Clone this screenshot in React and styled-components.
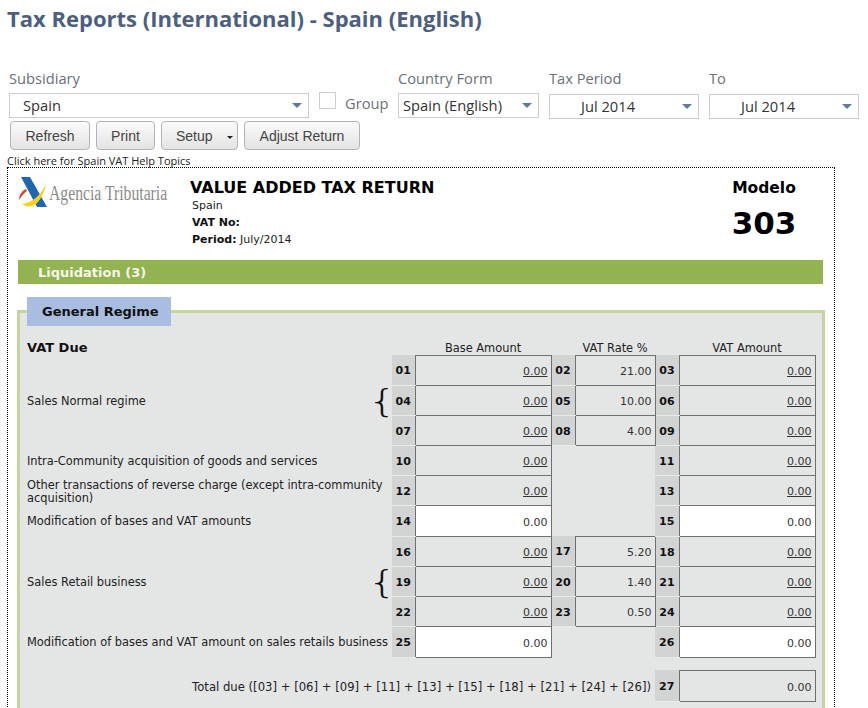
import React from 'react';
import styled, { createGlobalStyle } from 'styled-components';

const GlobalStyle = createGlobalStyle`
  html, body {
    margin: 0;
    height: 100%;
    overflow: hidden;
    background: #fff;
  }
`;

const lines = [
  { codes: ['01', '02', '03'], rate: '21.00' },
  { codes: ['04', '05', '06'], rate: '10.00', label: 'Sales Normal regime', brace: true },
  { codes: ['07', '08', '09'], rate: '4.00' },
  { codes: ['10', null, '11'], label: 'Intra-Community acquisition of goods and services' },
  { codes: ['12', null, '13'], label: 'Other transactions of reverse charge (except intra-community acquisition)', wrapped: true },
  { codes: ['14', null, '15'], label: 'Modification of bases and VAT amounts', open: true },
  { codes: ['16', '17', '18'], rate: '5.20' },
  { codes: ['19', '20', '21'], rate: '1.40', label: 'Sales Retail business', brace: true },
  { codes: ['22', '23', '24'], rate: '0.50' },
  { codes: ['25', null, '26'], label: 'Modification of bases and VAT amount on sales retails business', open: true },
];

function Select({ value, width, indent, offset }) {
  return (
    <SelectBox $width={width} $indent={indent} $offset={offset}>
      {value}
      <Caret />
    </SelectBox>
  );
}

function Amount({ open }) {
  if (open) return <ValueCell $open>0.00</ValueCell>;
  return (
    <ValueCell>
      <AmountLink>0.00</AmountLink>
    </ValueCell>
  );
}

function Logo() {
  return (
    <LogoWrap>
      <LogoMark viewBox="0 0 32 32">
        <path d="M2 0 L11 0 L28 30 L18 30 Z" fill="#1f66ae" />
        <path d="M27 6 C23 17 14 26 3 27 C8 31 15 30 19 25 C23 20 26 13 27 6 Z" fill="#f6d21c" />
        <path d="M7 12 C3 14 0 18 0 23 C2 20 4 17 8 14 Z" fill="#d8412f" />
      </LogoMark>
      <LogoText>Agencia Tributaria</LogoText>
    </LogoWrap>
  );
}

export default function App() {
  return (
    <Page>
      <GlobalStyle />
      <Title>Tax Reports (International) - Spain (English)</Title>
      <Filters>
        <Field>
          <FieldLabel>Subsidiary</FieldLabel>
          <Select value="Spain" width={300} indent={13} />
        </Field>
        <GroupField>
          <CheckBox />
          <GroupLabel>Group</GroupLabel>
        </GroupField>
        <Field>
          <FieldLabel>Country Form</FieldLabel>
          <Select value="Spain (English)" width={141} indent={4} />
        </Field>
        <Field>
          <FieldLabel>Tax Period</FieldLabel>
          <Select value="Jul 2014" width={150} indent={31} offset={1} />
        </Field>
        <Field>
          <FieldLabel>To</FieldLabel>
          <Select value="Jul 2014" width={150} indent={31} offset={1} />
        </Field>
      </Filters>
      <Buttons>
        <Button $width={80}>Refresh</Button>
        <Button $width={59}>Print</Button>
        <SetupButton $width={77}>
          Setup
          <SmallCaret />
        </SetupButton>
        <Button $width={116}>Adjust Return</Button>
      </Buttons>
      <HelpLink>Click here for Spain VAT Help Topics</HelpLink>
      <Report>
        <ReportHeader>
          <Logo />
          <Heading>
            <HeadingTitle>VALUE ADDED TAX RETURN</HeadingTitle>
            <HeadingLine>Spain</HeadingLine>
            <HeadingLine><b>VAT No:</b></HeadingLine>
            <HeadingLine><b>Period:</b> July/2014</HeadingLine>
          </Heading>
          <Modelo>
            <ModeloLabel>Modelo</ModeloLabel>
            <ModeloNumber>303</ModeloNumber>
          </Modelo>
        </ReportHeader>
        <SectionBar>Liquidation (3)</SectionBar>
        <PanelWrap>
          <Tab>General Regime</Tab>
          <Panel>
            <Grid>
              <colgroup>
                <col width="365" />
                <col width="23" />
                <col width="136" />
                <col width="24" />
                <col width="80" />
                <col width="24" />
                <col width="136" />
              </colgroup>
              <tbody>
                <tr>
                  <SubTitle>VAT Due</SubTitle>
                  <td />
                  <ColumnHead>Base Amount</ColumnHead>
                  <td />
                  <ColumnHead>VAT Rate %</ColumnHead>
                  <td />
                  <ColumnHead>VAT Amount</ColumnHead>
                </tr>
                {lines.map((line) => (
                  <Line key={line.codes[0]} $tall={line.open}>
                    <LabelCell $wrapped={line.wrapped}>
                      <LabelInner>
                        <span>{line.label}</span>
                        {line.brace && <Brace>{'{'}</Brace>}
                      </LabelInner>
                    </LabelCell>
                    <CodeCell>{line.codes[0]}</CodeCell>
                    <Amount open={line.open} />
                    {line.codes[1] ? (
                      <>
                        <CodeCell>{line.codes[1]}</CodeCell>
                        <ValueCell>{line.rate}</ValueCell>
                      </>
                    ) : (
                      <td colSpan={2} />
                    )}
                    <CodeCell>{line.codes[2]}</CodeCell>
                    <Amount open={line.open} />
                  </Line>
                ))}
                <Spacer>
                  <td colSpan={7} />
                </Spacer>
                <Line $tall>
                  <TotalLabel colSpan={5}>
                    Total due ([03] + [06] + [09] + [11] + [13] + [15] + [18] + [21] + [24] + [26])
                  </TotalLabel>
                  <CodeCell>27</CodeCell>
                  <ValueCell $low>0.00</ValueCell>
                </Line>
              </tbody>
            </Grid>
          </Panel>
        </PanelWrap>
      </Report>
    </Page>
  );
}

const Page = styled.div`
  width: 868px;
  font-family: "DejaVu Sans", Verdana, sans-serif;
  font-size: 11px;
  color: #222;
`;

const Title = styled.h1`
  margin: 0;
  padding: 3px 0 0 7px;
  height: 57px;
  box-sizing: border-box;
  font-family: "Open Sans", sans-serif;
  font-size: 22px;
  line-height: 30px;
  font-weight: 700;
  color: #4d5f7e;
`;

const Filters = styled.div`
  display: flex;
  padding: 11px 0 0 9px;
  gap: 10px;
`;

const Field = styled.div`
  display: flex;
  flex-direction: column;
`;

const GroupField = styled.div`
  display: flex;
  align-items: flex-start;
  gap: 9px;
  height: 19px;
  margin: 24px 0 0 0;
  width: 69px;
`;

const FieldLabel = styled.label`
  font-family: "Open Sans", sans-serif;
  font-size: 14.7px;
  line-height: 20px;
  height: 20px;
  color: #6b6f76;
  margin-bottom: 5px;
`;

const GroupLabel = styled(FieldLabel)`
  margin: 1px 0 0;
`;

const SelectBox = styled.div`
  position: relative;
  box-sizing: border-box;
  width: ${(p) => p.$width}px;
  height: 25px;
  margin-top: ${(p) => p.$offset || 0}px;
  padding-left: ${(p) => p.$indent}px;
  border: 1px solid #ccc;
  font-family: "Open Sans", sans-serif;
  font-size: 14.7px;
  line-height: 22px;
  color: #333;
  background: #fff;
`;

const Caret = styled.span`
  position: absolute;
  right: 6px;
  top: 9px;
  width: 0;
  height: 0;
  border-left: 5px solid transparent;
  border-right: 5px solid transparent;
  border-top: 5px solid #5f7a9c;
`;

const CheckBox = styled.span`
  display: block;
  box-sizing: border-box;
  width: 17px;
  height: 17px;
  border: 1px solid #ccc;
  flex: none;
`;

const Buttons = styled.div`
  display: flex;
  gap: 6px;
  padding: 2px 0 0 10px;
`;

const Button = styled.button`
  position: relative;
  box-sizing: border-box;
  width: ${(p) => p.$width}px;
  height: 29px;
  padding: 0;
  border: 1px solid #b4b4b4;
  border-radius: 4px;
  background: linear-gradient(#fbfbfb, #e3e3e3);
  font-family: "Liberation Sans", Arial, sans-serif;
  font-size: 14px;
  color: #444;
`;

const SetupButton = styled(Button)`
  padding-left: 14px;
  text-align: left;
`;

const SmallCaret = styled.span`
  position: absolute;
  right: 4px;
  top: 14px;
  width: 0;
  height: 0;
  border-left: 3px solid transparent;
  border-right: 3px solid transparent;
  border-top: 3px solid #222;
`;

const HelpLink = styled.a`
  display: block;
  margin: 4px 0 0 7px;
  height: 13px;
  font-family: "Open Sans", sans-serif;
  font-size: 11px;
  line-height: 14px;
  color: #222;
`;

const Report = styled.div`
  box-sizing: border-box;
  width: 828px;
  margin-left: 7px;
  padding: 0 10px 40px;
  border: 1px dotted #000;
  border-bottom: 0;
`;

const ReportHeader = styled.div`
  display: flex;
  height: 92px;
`;

const LogoWrap = styled.div`
  display: flex;
  align-items: center;
  width: 171px;
  height: 32px;
  margin: 9px 0 0 1px;
  flex: none;
`;

const LogoMark = styled.svg`
  display: block;
  width: 32px;
  height: 32px;
  flex: none;
`;

const LogoText = styled.span`
  font-family: "Liberation Serif", serif;
  font-size: 20px;
  color: #8a8a8a;
  margin-left: -2px;
  white-space: nowrap;
  transform: scaleX(0.785);
  transform-origin: left center;
`;

const Heading = styled.div`
  flex: 1;
  padding-top: 10px;
`;

const HeadingTitle = styled.div`
  font-size: 16px;
  font-weight: 700;
  line-height: 19px;
  color: #000;
`;

const HeadingLine = styled.div`
  padding-left: 2px;
  line-height: 17px;
  height: 17px;
  color: #222;

  b {
    color: #111;
  }
`;

const Modelo = styled.div`
  width: 100px;
  padding-right: 10px;
  padding-top: 10px;
  text-align: center;
  color: #000;
`;

const ModeloLabel = styled.div`
  font-size: 15.5px;
  font-weight: 700;
  line-height: 20px;
`;

const ModeloNumber = styled.div`
  font-size: 31px;
  font-weight: 700;
  line-height: 40px;
  margin-top: 5px;
`;

const SectionBar = styled.div`
  box-sizing: border-box;
  width: 805px;
  height: 24px;
  padding-left: 20px;
  background: #93b252;
  font-size: 13px;
  font-weight: 700;
  line-height: 25px;
  color: #f4f6ea;
`;

const PanelWrap = styled.div`
  position: relative;
  margin: 26px 0 0 -1px;
  width: 808px;
`;

const Tab = styled.div`
  position: absolute;
  left: 10px;
  top: -13px;
  width: 144px;
  height: 29px;
  box-sizing: border-box;
  padding-left: 15px;
  background: #a9bde0;
  font-size: 13px;
  font-weight: 700;
  line-height: 29px;
  color: #111;
`;

const Panel = styled.div`
  box-sizing: border-box;
  padding: 25px 6px 40px 7px;
  border: 3px solid #c5d5a0;
  background: #e4e6e6;
`;

const Grid = styled.table`
  width: 788px;
  table-layout: fixed;
  border-collapse: collapse;
`;

const SubTitle = styled.td`
  padding: 2px 0 0;
  height: 15px;
  font-size: 13px;
  font-weight: 700;
  color: #111;
`;

const ColumnHead = styled.td`
  padding: 0;
  text-align: center;
  font-size: 11.42px;
  line-height: 13px;
  vertical-align: bottom;
  white-space: nowrap;
  color: #222;
`;

const Line = styled.tr`
  height: ${(p) => (p.$tall ? 31 : 30)}px;
`;

const LabelCell = styled.td`
  padding: ${(p) => (p.$wrapped ? '0' : '2px 0 0')};
  vertical-align: ${(p) => (p.$wrapped ? 'bottom' : 'middle')};
  font-size: 11.42px;
  line-height: 13px;
  color: #222;
`;

const LabelInner = styled.div`
  position: relative;
  padding-right: 2px;
`;

const Brace = styled.span`
  position: absolute;
  right: 0;
  top: -12px;
  font-family: "DejaVu Sans", sans-serif;
  font-size: 32px;
  line-height: 36px;
  font-weight: 200;
  color: #111;
  transform: scaleX(1.5);
`;

const CodeCell = styled.td`
  padding: 2px 0 0;
  background: #d2d3d3;
  border-bottom: 1px solid #e8e9e9;
  text-align: center;
  font-size: 11px;
  font-weight: 700;
  color: #111;
`;

const ValueCell = styled.td`
  padding: ${(p) => (p.$open || p.$low ? '4px' : '2px')} 3px 0 0;
  border: 1px solid #6f6f6f;
  background: ${(p) => (p.$open ? '#fff' : 'transparent')};
  text-align: right;
  font-size: 11px;
  color: #333;
`;

const AmountLink = styled.a`
  color: #333;
  text-decoration: underline;
`;

const Spacer = styled.tr`
  height: 13px;
`;

const TotalLabel = styled.td`
  padding: 2px 4px 0 0;
  text-align: right;
  font-size: 11.65px;
  white-space: nowrap;
  color: #222;
`;
